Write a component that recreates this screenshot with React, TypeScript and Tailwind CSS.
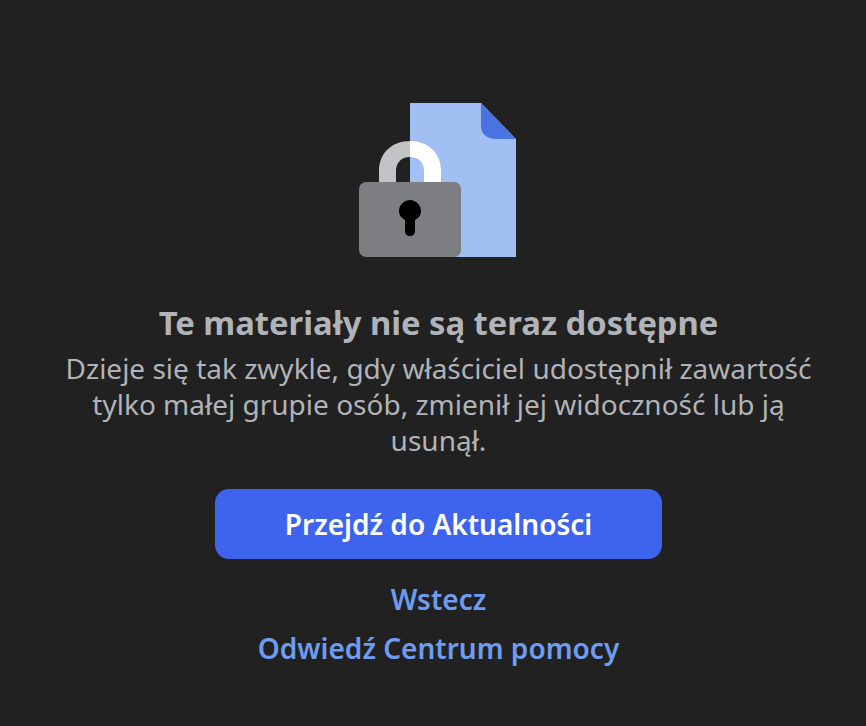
function LockIcon() {
  return (
    <svg className="mr-[2px]" width="158" height="155" viewBox="0 0 158 155" fill="none">
      {/* document */}
      <path d="M51 0H122L157 36V154H51Z" fill="#A2BFF4" />
      <path d="M122 0L157 36H137C128 36 122 31 122 23Z" fill="#4A73E2" />
      {/* shackle, left half sits on the dark background */}
      <path d="M20 80V68C20 50 33 38 51 38V54C42 54 37 60 37 68V80Z" fill="#C2C3C7" />
      <path d="M82 80V68C82 50 69 38 51 38V54C60 54 65 60 65 68V80Z" fill="#FFFFFF" />
      {/* body */}
      <rect x="0" y="79" width="102" height="75" rx="7" fill="#7D7E82" />
      {/* keyhole */}
      <path
        d="M51 97C45 97 40 102 40 108C40 112 42 115 46 117V128C46 131 48 133 51 133C54 133 56 131 56 128V117C60 115 62 112 62 108C62 102 57 97 51 97Z"
        fill="#000000"
      />
    </svg>
  );
}

export default function App() {
  return (
    <div className="min-h-[726px] bg-[#212121] flex flex-col items-center pt-[103px] pl-[11px] font-['Noto_Sans','Open_Sans',sans-serif]">
      <LockIcon />
      <h1 className="mt-[45px] text-[32.75px] leading-[40px] font-bold text-[#b0b3b8] text-center">
        Te materiały nie są teraz dostępne
      </h1>
      <p className="mt-[7px] w-[760px] text-[28px] leading-[36px] text-[#b0b3b8] text-center">
        Dzieje się tak zwykle, gdy właściciel udostępnił zawartość tylko małej grupie osób, zmienił jej widoczność lub ją usunął.
      </p>
      <button className="mt-[31px] w-[447px] h-[70px] rounded-[14px] bg-[#3e64ee] text-white text-[28px] font-semibold">
        Przejdź do Aktualności
      </button>
      <a className="mt-[20px] text-[28px] leading-[40px] font-semibold text-[#6e9cf0]">Wstecz</a>
      <a className="mt-[9px] text-[28px] leading-[40px] font-semibold text-[#6e9cf0]">Odwiedź Centrum pomocy</a>
    </div>
  );
}
